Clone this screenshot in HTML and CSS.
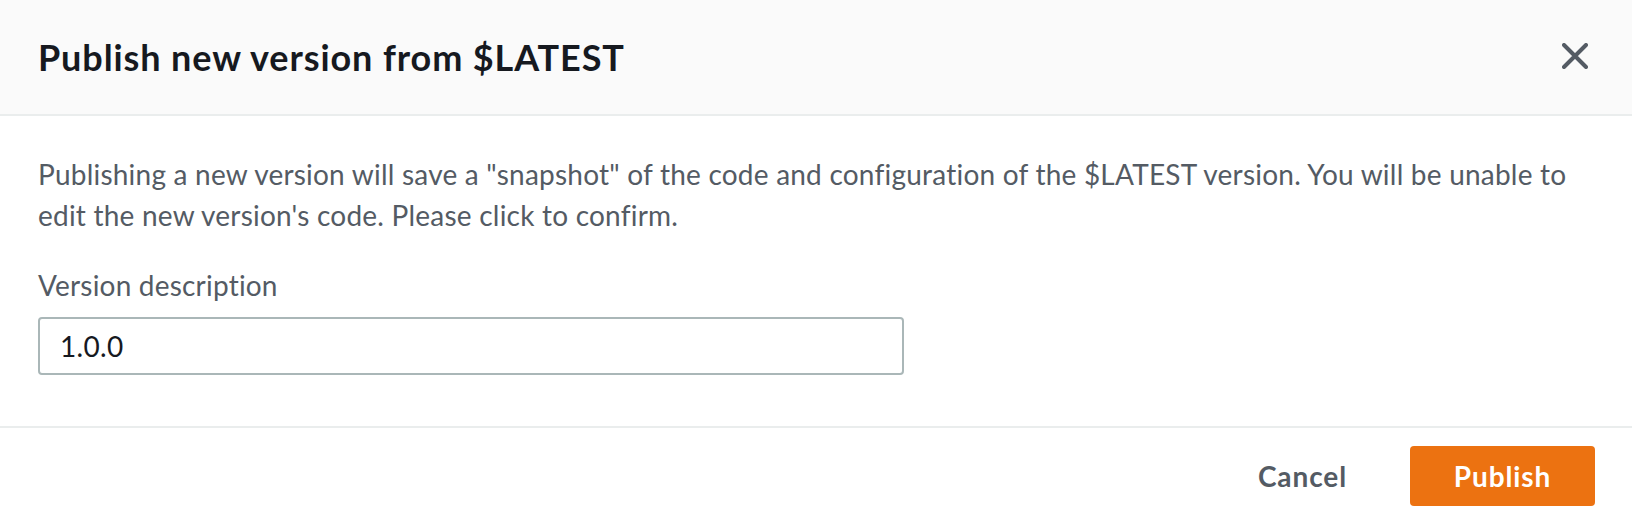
FILE: index.html
```html
<!DOCTYPE html>
<html lang="en">
<head>
<meta charset="utf-8">
<title>Publish new version</title>
<link rel="stylesheet" href="styles.css">
</head>
<body>
<div class="modal">
  <div class="modal-header">
    <h2 class="modal-title">Publish new version from $LATEST</h2>
    <button class="close-btn" aria-label="Close">
      <svg width="26" height="26" viewBox="0 0 26 26" aria-hidden="true">
        <path d="M2 2 L24 24 M24 2 L2 24" stroke="#545b64" stroke-width="4" stroke-linecap="round" fill="none"/>
      </svg>
    </button>
  </div>
  <div class="modal-body">
    <p class="desc">Publishing a new version will save a "snapshot" of the code and configuration of the $LATEST version. You will be unable to edit the new version's code. Please click to confirm.</p>
    <label class="field-label" for="ver">Version description</label>
    <input class="text-input" id="ver" type="text" value="1.0.0">
  </div>
  <div class="modal-footer">
    <button class="btn btn-link">Cancel</button>
    <button class="btn btn-primary">Publish</button>
  </div>
</div>
</body>
</html>
```

FILE: styles.css
```css
html, body {
  margin: 0;
  padding: 0;
  background: #ffffff;
}

body {
  font-family: Lato, "Open Sans", "Liberation Sans", sans-serif;
  color: #545b64;
}

.modal {
  width: 1632px;
  height: 522px;
  display: flex;
  flex-direction: column;
  overflow: hidden;
}

.modal-header {
  height: 116px;
  box-sizing: border-box;
  background: #fafafa;
  border-bottom: 2px solid #eaeded;
  display: flex;
  align-items: flex-start;
  justify-content: space-between;
  padding: 35px 44px 0 38px;
  flex: none;
}

.modal-title {
  margin: 0;
  font-size: 36px;
  line-height: 44px;
  font-weight: 700;
  letter-spacing: 0.9px;
  color: #16191f;
}

.close-btn {
  background: none;
  border: 0;
  padding: 0;
  margin-top: 8px;
  width: 26px;
  height: 26px;
  display: flex;
  cursor: pointer;
}

.modal-body {
  padding: 38px 38px 0 38px;
  height: 312px;
  box-sizing: border-box;
  border-bottom: 2px solid #eaeded;
  display: flex;
  flex-direction: column;
  align-items: flex-start;
  flex: none;
}

.desc {
  margin: 0;
  font-size: 28px;
  line-height: 41px;
  letter-spacing: 0.22px;
  color: #545b64;
}

.field-label {
  margin-top: 29px;
  font-size: 28px;
  line-height: 41px;
  letter-spacing: 0.2px;
  color: #545b64;
}

.text-input {
  margin-top: 11px;
  width: 866px;
  height: 58px;
  box-sizing: border-box;
  border: 2px solid #aab7b8;
  border-radius: 4px;
  padding: 0 20px;
  font-family: Lato, "Open Sans", "Liberation Sans", sans-serif;
  font-size: 28px;
  letter-spacing: 0.3px;
  color: #16191f;
  background: #ffffff;
  outline: none;
}

.modal-footer {
  display: flex;
  justify-content: flex-end;
  align-items: center;
  padding: 18px 37px 0 0;
  gap: 31px;
}

.btn {
  font-family: Lato, "Open Sans", "Liberation Sans", sans-serif;
  font-size: 28px;
  font-weight: 700;
  letter-spacing: 0.9px;
  height: 60px;
  border-radius: 4px;
  cursor: pointer;
}

.btn-link {
  background: none;
  border: 0;
  color: #545b64;
  padding: 0 32px;
}

.btn-primary {
  background: #ec7211;
  border: 0;
  color: #ffffff;
  width: 185px;
  padding: 0;
}
```
